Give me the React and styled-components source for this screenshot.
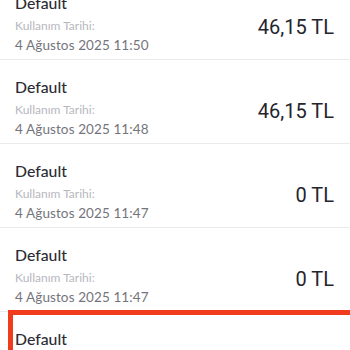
import React from "react";
import styled, { createGlobalStyle } from "styled-components";

const Global = createGlobalStyle`
  html, body { margin: 0; padding: 0; background: #fff; }
  body { width: 350px; height: 350px; overflow: hidden; }
`;

const Viewport = styled.div`
  position: relative;
  width: 350px;
  height: 350px;
  overflow: hidden;
  background: #fff;
`;

const List = styled.div`
  display: flex;
  flex-direction: column;
  margin-top: -24px;
`;

const Row = styled.div`
  position: relative;
  display: flex;
  flex-direction: column;
  height: 84px;
  box-sizing: border-box;
  padding: 17px 16px 0 15px;
  border-bottom: 1px solid #e9e9ee;
`;

const Title = styled.div`
  font-family: Lato, "Open Sans", sans-serif;
  font-size: 15.8px;
  line-height: 20px;
  font-weight: 500;
  color: #2b2b33;
`;

const Body = styled.div`
  display: flex;
  align-items: flex-start;
  justify-content: space-between;
  margin-top: 4px;
`;

const Meta = styled.div`
  display: flex;
  flex-direction: column;
`;

const Label = styled.div`
  font-family: Lato, "Open Sans", sans-serif;
  font-size: 12px;
  line-height: 17px;
  color: #b7b7be;
`;

const DateText = styled.div`
  font-family: Lato, "Open Sans", sans-serif;
  font-size: 13.5px;
  line-height: 20px;
  letter-spacing: 0.1px;
  color: #74747c;
  margin-top: 1px;
`;

const Amount = styled.div`
  font-family: Roboto, "Liberation Sans", sans-serif;
  font-size: 20px;
  line-height: 24px;
  color: #24242c;
  margin-top: -2px;
`;

const Focus = styled.div`
  position: absolute;
  left: 8px;
  top: -2px;
  right: -10px;
  height: 120px;
  border: 5px solid #f03b1c;
  pointer-events: none;
`;

const items = [
  { date: "4 Ağustos 2025 11:50", amount: "46,15 TL" },
  { date: "4 Ağustos 2025 11:48", amount: "46,15 TL" },
  { date: "4 Ağustos 2025 11:47", amount: "0 TL" },
  { date: "4 Ağustos 2025 11:47", amount: "0 TL" },
  { date: "4 Ağustos 2025 11:46", amount: "0 TL", focused: true },
];

export default function App() {
  return (
    <>
      <Global />
      <Viewport>
        <List>
          {items.map((it, i) => (
            <Row key={i}>
              {it.focused && <Focus />}
              <Title>Default</Title>
              <Body>
                <Meta>
                  <Label>Kullanım Tarihi:</Label>
                  <DateText>{it.date}</DateText>
                </Meta>
                <Amount>{it.amount}</Amount>
              </Body>
            </Row>
          ))}
        </List>
      </Viewport>
    </>
  );
}
